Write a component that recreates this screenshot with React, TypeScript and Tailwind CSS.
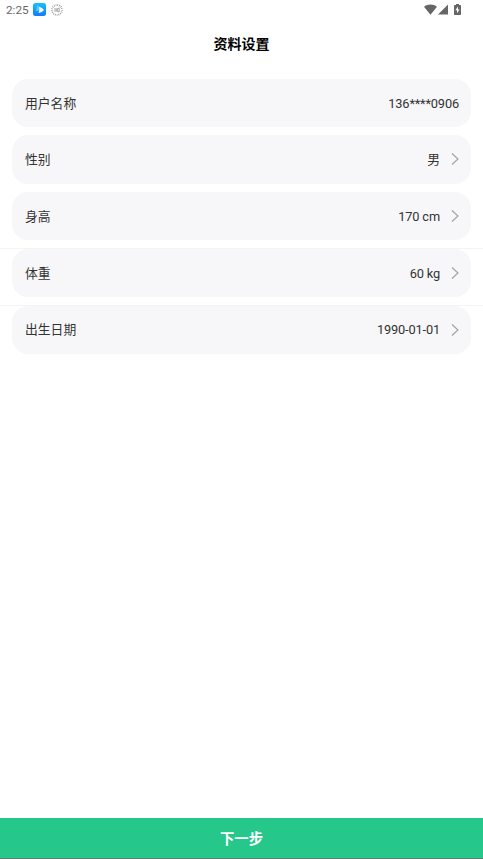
type Row = { label: string; value: string; link: boolean; className: string; divider?: boolean };

const ROWS: Row[] = [
    { label: "用户名称", value: "136****0906", link: false, className: "h-12 pt-px" },
    { label: "性别", value: "男", link: true, className: "mt-2 h-[48.5px]" },
    { label: "身高", value: "170 cm", link: true, className: "mt-[8.5px] h-12 pt-px" },
    { label: "体重", value: "60 kg", link: true, className: "h-12 pt-px", divider: true },
    { label: "出生日期", value: "1990-01-01", link: true, className: "h-12", divider: true },
];

function Chevron() {
    return (
        <svg className="mb-px ml-[11px] h-3 w-2" viewBox="0 0 8 12" fill="none" stroke="#a0a0a2" strokeWidth="1.1">
            <path d="M1 .5 7 6 1 11.5" />
        </svg>
    );
}

function StatusBar() {
    return (
        <div className="flex h-5 items-center pl-1.5 text-[#666]">
            <span className="w-[27px] text-[11.7px] leading-5">2:25</span>
            <svg className="mb-px size-[13px]" viewBox="0 0 13 13">
                <defs>
                    <linearGradient id="app" x1="0" y1="0" x2="0" y2="1">
                        <stop stopColor="#12c2fb" />
                        <stop offset="1" stopColor="#1679fa" />
                    </linearGradient>
                </defs>
                <rect width="13" height="13" rx="2.5" fill="url(#app)" />
                <path d="M4 2 6.3 3.6V7.4L3 8.2z" fill="#5cc4ff" />
                <path d="M6 3.7Q9.5 4.5 11 7 9 9.7 5.6 10 7 7 6 3.7z" fill="#fff" />
            </svg>
            <svg className="ml-[5px] size-3" viewBox="0 0 12 12" fill="none" stroke="#858585">
                <circle cx="6" cy="6" r="5" strokeWidth="1.6" strokeDasharray=".7 1.1" />
                <path d="M4 4v4M5.3 4.3v3.4M6.7 4.2h1.5v3.6H6.7z" strokeWidth=".7" />
            </svg>
            <div className="mr-[22px] mb-px ml-auto flex items-center">
                <svg className="h-[11px] w-[13px]" viewBox="0 0 13 11" fill="#666">
                    <path d="M0 2.8C3.7-.2 9.3-.2 13 2.8L6.5 10.8z" />
                </svg>
                <svg className="ml-px h-[11px] w-[10px]" viewBox="0 0 10 11" fill="#666">
                    <path d="M10 .5v10H0z" />
                </svg>
                <svg className="ml-1.5 h-[11px] w-[7px]" viewBox="0 0 7 11">
                    <path d="M2 0h3v1h1.2q.8 0 .8.8v8.4q0 .8-.8.8H.8Q0 11 0 10.2V1.8Q0 1 .8 1H2z" fill="#666" />
                    <path d="M4 2.5 1.4 6.3H3v3l2.6-3.8H4z" fill="#fff" />
                </svg>
            </div>
        </div>
    );
}

export default function App() {
    return (
        <div className="flex h-screen flex-col overflow-hidden bg-white font-[Roboto,'Noto_Sans_CJK_SC',sans-serif] text-[#333]">
            <StatusBar />
            <h1 className="h-[59px] text-center text-[14px] leading-[49px] font-bold text-black">资料设置</h1>

            <div className="flex flex-1 flex-col">
                {ROWS.map((row) => (
                    <div key={row.label}>
                        {row.divider && <div className="mt-2 h-px bg-[#f3f3f4]" />}
                        <div className={`mx-3 flex items-center rounded-[16px] bg-[#f7f7f9] pr-3 pl-[13px] text-[12.8px] ${row.className}`}>
                            <span>{row.label}</span>
                            <span className="ml-auto tracking-[-0.15px]">{row.value}</span>
                            {row.link && <Chevron />}
                        </div>
                    </div>
                ))}
            </div>

            <button className="h-[41px] border-b border-[#5f8176] bg-[#26c78b] pt-[3px] text-[14.4px] font-bold text-white">下一步</button>
        </div>
    );
}
